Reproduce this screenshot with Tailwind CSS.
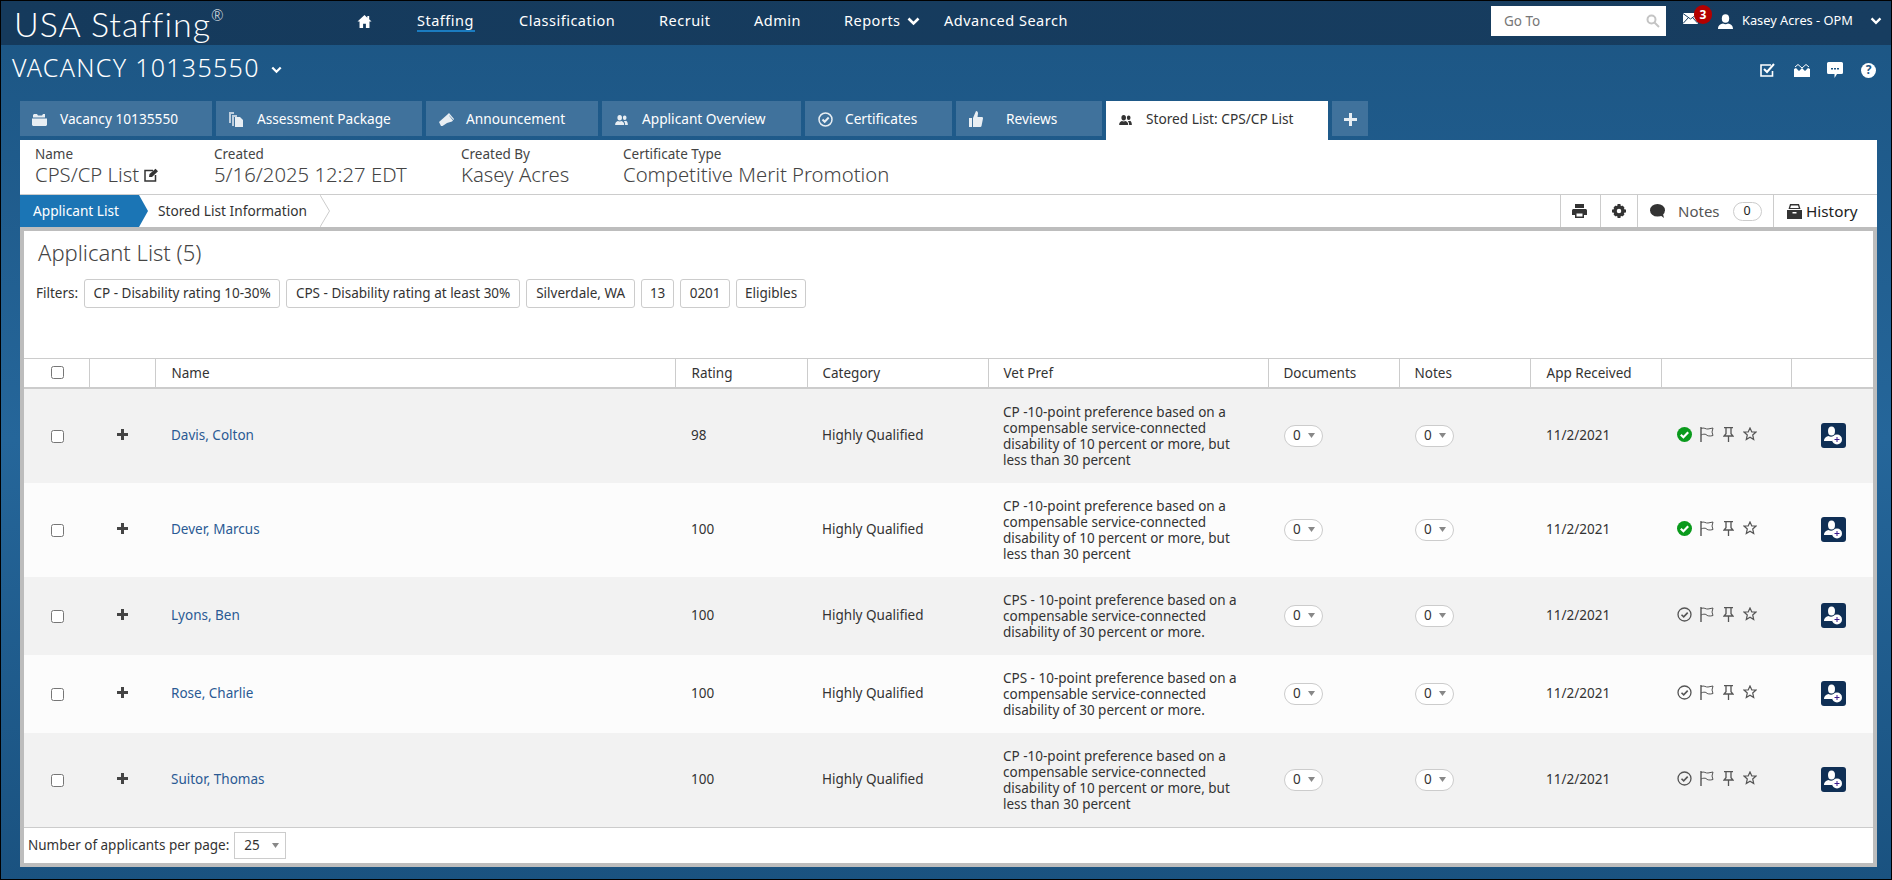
<!DOCTYPE html>
<html lang="en">
<head>
  <meta charset="UTF-8">
  <title>USA Staffing - Stored List</title>
  <script src="https://cdn.jsdelivr.net/npm/@tailwindcss/browser@4"></script>
</head>
<body class="w-[1892px] h-[880px] overflow-hidden border border-black font-['Noto_Sans',sans-serif] text-[13.5px] text-[#333] flex flex-col bg-linear-to-b from-[#1c5583] via-[#25669a] to-[#1a5280]">

  <!-- top nav -->
  <nav class="h-[44px] shrink-0 flex items-center pb-[4px] bg-linear-to-r from-[#153a5c] to-[#173d60] text-white text-[14.5px] tracking-[.5px]">
    <div class="w-[356px] pl-[13px] mt-[6px] flex items-start font-['Lato',sans-serif] font-light text-[34px] tracking-[1px] leading-none">USA Staffing<span class="text-[15px] leading-none mt-[1px]">®</span></div>
    <a class="w-[60px] flex">
      <svg class="w-[15px] h-[15px]" viewBox="0 0 16 16" fill="#fff"><path d="M8 1 .5 8h2.200v7h3.800v-4.500h3V15h3.800V8h2.200l-2.500-2.300V2h-2v1.900z"/></svg>
    </a>
    <a class="w-[102px] relative">Staffing<span class="absolute left-0 top-[20px] w-[58px] h-[2px] bg-[#1b7cc0]"></span></a>
    <a class="w-[140px]">Classification</a>
    <a class="w-[95px]">Recruit</a>
    <a class="w-[90px]">Admin</a>
    <a class="w-[100px] flex items-center gap-[6px]">Reports
      <svg class="w-[13px] h-[9px]" viewBox="0 0 13 9" fill="none" stroke="#fff" stroke-width="2.600"><path d="m1.500 1.500 5 5 5-5"/></svg>
    </a>
    <a>Advanced Search</a>
    <div class="ml-auto w-[175px] h-[30px] bg-white flex items-center justify-between pl-[13px] pr-[6px] text-[#777] text-[13.5px] tracking-normal">Go To
      <svg class="w-[14px] h-[14px]" viewBox="0 0 14 14" fill="none" stroke="#c4c4c4" stroke-width="2"><circle cx="5.500" cy="5.500" r="4"/><path d="m8.500 8.500 4.500 4.500"/></svg>
    </div>
    <div class="relative w-[35px] ml-[17px] mt-[-5px] flex">
      <svg class="w-[15px] h-[11px]" viewBox="0 0 15 11"><rect width="15" height="11" fill="#fff"/><path d="m0 .5 7.500 5.500L15 .5M0 10.500l5.500-6M15 10.500l-5.500-6" fill="none" stroke="#173d60"/></svg>
      <span class="absolute left-[11px] top-[-8px] w-[18px] h-[19px] rounded-full bg-[#b30000] text-white text-[12px] font-bold tracking-normal flex items-center justify-center">3</span>
    </div>
    <svg class="w-[15px] h-[15px]" viewBox="0 0 15 15" fill="#fff"><ellipse cx="7.500" cy="4.500" rx="3.700" ry="4.300"/><path d="M0 15c0-4 2.500-5 5-5.500 1.500 1 3.500 1 5 0 2.500.5 5 1.500 5 5.500z"/></svg>
    <span class="ml-[9px] w-[128px] text-[12.8px] tracking-normal">Kasey Acres - OPM</span>
    <svg class="w-[12px] h-[8px] mr-[9px]" viewBox="0 0 13 9" fill="none" stroke="#fff" stroke-width="2.600"><path d="m1.500 1.500 5 5 5-5"/></svg>
  </nav>

  <!-- vacancy title bar -->
  <div class="h-[56px] shrink-0 flex items-center pl-[11px] text-white">
    <span class="text-[25px] tracking-[1.300px] font-light mt-[-10px]">VACANCY 10135550</span>
    <svg class="w-[11px] h-[8px] ml-[11px] mt-[-6px]" viewBox="0 0 13 9" fill="none" stroke="#fff" stroke-width="2.600"><path d="m1.500 1.500 5 5 5-5"/></svg>
    <div class="ml-auto mr-[15px] mt-[-6px] flex items-center">
      <svg class="w-[15px] h-[14px]" viewBox="0 0 15 14" fill="none" stroke="#fff"><path stroke-width="1.600" d="M12.500 8v5H1V2h10"/><path stroke-width="2" d="m4 6 3 3 7-8"/></svg>
      <svg class="w-[16px] h-[13px] ml-[19px]" viewBox="0 0 16 13" fill="#fff"><path d="M0 5v8h16V5l-2-1-3 3-3-3-3 3-3-3z"/><path d="m1 3 3-2.500 4 3.500 4-3.500 3 2.500" fill="none" stroke="#fff"/></svg>
      <svg class="w-[16px] h-[16px] ml-[17px]" viewBox="0 0 16 16" fill="#fff"><path d="M1.500 0h13A1.500 1.500 0 0 1 16 1.500v9a1.500 1.500 0 0 1-1.500 1.500H10l-2.500 4V12h-6A1.500 1.500 0 0 1 0 10.500v-9A1.500 1.500 0 0 1 1.500 0z"/><path d="M4 6h2v1.500H4zm3 0h2v1.500H7zm3 0h2v1.500h-2z" fill="#1c5583"/></svg>
      <span class="w-[15px] h-[15px] ml-[18px] rounded-full bg-white text-[#1c5583] text-[12px] font-bold flex items-center justify-center leading-none">?</span>
    </div>
  </div>

  <!-- tabs -->
  <div class="h-[39px] shrink-0 flex gap-[4px] pl-[19px] text-white text-[13.7px]">
    <a class="w-[192px] h-[35px] pt-[2px] bg-[#40729c] flex items-center pl-[12px]">
      <svg class="w-[15px] h-[12px] mr-[13px]" viewBox="0 0 15 12" fill="#e8eef3"><path d="M2 0h3l1 1.500h4L11 0h2v3.500H1V1zM0 4.500h15V11l-1 1H1l-1-1z"/></svg>Vacancy 10135550</a>
    <a class="w-[206px] h-[35px] pt-[2px] bg-[#40729c] flex items-center pl-[13px]">
      <svg class="w-[15px] h-[15px] mr-[13px]" viewBox="0 0 15 15" fill="#e8eef3"><path d="M0 0h5v2H2v9H0zm3 3h5v2H5v9H3z" opacity=".75"/><path d="M6 5h5l3 3v7H6z"/></svg>Assessment Package</a>
    <a class="w-[172px] h-[35px] pt-[2px] bg-[#40729c] flex items-center pl-[13px]">
      <svg class="w-[15px] h-[14px] mr-[12px]" viewBox="0 0 15 14" fill="#e8eef3"><path d="M0 9 9 1l2 1-1 .5 4 5-1 1L8 10 3.500 13H2zM10 0l5 6-.5 1L9 1z"/></svg>Announcement</a>
    <a class="w-[199px] h-[35px] pt-[2px] bg-[#40729c] flex items-center pl-[13px]">
      <svg class="w-[13px] h-[10px] mr-[14px]" viewBox="0 0 14 11" fill="#e8eef3"><ellipse cx="5" cy="3" rx="2.500" ry="3"/><path d="M0 11c0-3 1.500-4 3-4.500 1 .7 3 .7 4 0 1.500.5 3 1.500 3 4.500z"/><ellipse cx="10.500" cy="3" rx="2" ry="2.500"/><path d="M11 11c0-2-.5-3.500-1.500-4.500 1 .3 1.500.3 2.500-.2 1 .5 2 1.500 2 4.700z"/></svg>Applicant Overview</a>
    <a class="w-[147px] h-[35px] pt-[2px] bg-[#40729c] flex items-center pl-[13px]">
      <svg class="w-[15px] h-[15px] mr-[12px]" viewBox="0 0 15 15" fill="none" stroke="#e8eef3" stroke-width="1.500"><circle cx="7.500" cy="7.500" r="6.500"/><path d="m4.500 7.500 2.200 2.300 4-4.300" stroke-width="2"/></svg>Certificates</a>
    <a class="w-[146px] h-[35px] pt-[2px] bg-[#40729c] flex items-center pl-[13px]">
      <svg class="w-[14px] h-[17px] mr-[23px]" viewBox="0 0 14 17" fill="#e8eef3"><path d="M0 7h3v9H0zM4 7l3-7c1.500 0 2 1 2 2.500L8.500 6H13c1 0 1 1 1 1.500L12.500 15c-.2.800-1 1-1.500 1H4z"/></svg>Reviews</a>
    <a class="w-[222px] h-[39px] pb-[2px] bg-white text-[#333] flex items-center pl-[13px]">
      <svg class="w-[13px] h-[10px] mr-[14px]" viewBox="0 0 14 11" fill="#333"><ellipse cx="5" cy="3" rx="2.500" ry="3"/><path d="M0 11c0-3 1.500-4 3-4.500 1 .7 3 .7 4 0 1.500.5 3 1.500 3 4.500z"/><ellipse cx="10.500" cy="3" rx="2" ry="2.500"/><path d="M11 11c0-2-.5-3.500-1.500-4.500 1 .3 1.500.3 2.500-.2 1 .5 2 1.500 2 4.700z"/></svg>Stored List: CPS/CP List</a>
    <a class="w-[36px] h-[35px] pt-[2px] bg-[#40729c] flex items-center justify-center">
      <svg class="w-[13px] h-[13px]" viewBox="0 0 13 13" fill="#e8eef3"><path d="M5 0h3v5h5v3H8v5H5V8H0V5h5z"/></svg></a>
  </div>

  <!-- white work area -->
  <div class="ml-[19px] w-[1857px] flex-1 mb-[13px] flex flex-col bg-white">
    <!-- record header -->
    <div class="h-[54px] shrink-0 flex pl-[15px] pt-[5px] text-[#444]">
      <div class="w-[179px]"><div class="leading-[18px]">Name</div><div class="text-[20.3px] leading-[23px] font-light flex items-center gap-[5px]">CPS/CP List
        <svg class="w-[14px] h-[14px]" viewBox="0 0 14 14" fill="none" stroke="#333" stroke-width="1.500"><path d="M9 2.500H1v10.500h10.500V7"/><path d="m5 9 .5-3L11.500.8 14 3.300 8 9z" fill="#333" stroke="none"/></svg></div></div>
      <div class="w-[247px]"><div class="leading-[18px]">Created</div><div class="text-[20.3px] leading-[23px] font-light">5/16/2025 12:27 EDT</div></div>
      <div class="w-[162px]"><div class="leading-[18px]">Created By</div><div class="text-[20.3px] leading-[23px] font-light">Kasey Acres</div></div>
      <div><div class="leading-[18px]">Certificate Type</div><div class="text-[20.3px] leading-[23px] font-light">Competitive Merit Promotion</div></div>
    </div>

    <!-- breadcrumb steps + actions -->
    <div class="h-[33px] shrink-0 border-t border-[#ccc] flex items-stretch text-[13.7px]">
      <div class="w-[128px] bg-[#1b75b5] text-white flex items-center pl-[13px] [clip-path:polygon(0_0,119px_0,128px_50%,119px_100%,0_100%)]">Applicant List</div>
      <div class="relative w-[182px] flex items-center pl-[10px]">Stored List Information
        <svg class="absolute right-0 top-0 w-[10px] h-[32px]" viewBox="0 0 10 32" fill="none" stroke="#ccc"><path d="m0 0 9.500 16L0 32"/></svg>
      </div>
      <div class="ml-auto flex items-stretch text-[#222]">
        <div class="w-[40px] border-l border-[#ccc] flex items-center justify-center pr-[3px]">
          <svg class="w-[15px] h-[14px]" viewBox="0 0 15 14" fill="#333"><path d="M3 0h9v4H3zM1.500 5h12c.8 0 1.500.7 1.500 1.500V11h-3v3H3v-3H0V6.500C0 5.700.7 5 1.500 5zM4.500 9.500V12.500h6V9.500z"/></svg></div>
        <div class="w-[37px] border-l border-[#ccc] flex items-center justify-center">
          <svg class="w-[14px] h-[14px]" viewBox="0 0 14 14"><circle cx="7" cy="7" r="4" fill="none" stroke="#333" stroke-width="3.500"/><path d="M5.500 0h3v3h-3zm0 11h3v3h-3zM0 5.500h3v3H0zm11 0h3v3h-3zM1.500 3.500l2-2 2 2-2 2zm7 7 2-2 2 2-2 2zm-7 0 2-2 2 2-2 2zm7-7 2-2 2 2-2 2z" fill="#333"/></svg></div>
        <div class="w-[136px] border-l border-[#ccc] flex items-center pl-[12px]">
          <svg class="w-[15px] h-[14px] shrink-0" viewBox="0 0 15 14" fill="#333"><ellipse cx="7.500" cy="6.300" rx="7.500" ry="6.300"/><path d="m10 11 4 3-1-4z"/></svg>
          <span class="ml-[13px] text-[#555] text-[15px]">Notes</span>
          <span class="ml-[13px] w-[29px] h-[19px] rounded-full border border-[#ccc] flex items-center justify-center text-[12.5px]">0</span>
        </div>
        <div class="w-[104px] border-l border-[#ccc] flex items-center pl-[13px] gap-[4px] text-[15.300px]">
          <svg class="w-[15px] h-[15px]" viewBox="0 0 15 15" fill="#333"><path d="M3 0h9l1.500 5h-12zM4 1.500l-.8 2.500h8.600L11 1.500zM0 6h15v9H0zm5.500 2v1.500h4V8z"/></svg>History</div>
      </div>
    </div>

    <!-- applicant list panel -->
    <div class="flex-1 border-x-4 border-t-4 border-b-4 border-[#bdbdbd] flex flex-col">
      <h2 class="h-[48px] shrink-0 pl-[14px] pt-[6px] text-[22px] font-light leading-[30px] text-[#444]">Applicant List (5)</h2>
      <div class="h-[79px] shrink-0 flex items-start pl-[12px] gap-[6px]">
        <span class="h-[29px] flex items-center">Filters:</span>
        <span class="w-[196px] h-[29px] flex items-center justify-center border border-[#ccc] rounded-[3px]">CP - Disability rating 10-30%</span>
        <span class="w-[234px] h-[29px] flex items-center justify-center border border-[#ccc] rounded-[3px]">CPS - Disability rating at least 30%</span>
        <span class="w-[109px] h-[29px] flex items-center justify-center border border-[#ccc] rounded-[3px]">Silverdale, WA</span>
        <span class="w-[33px] h-[29px] flex items-center justify-center border border-[#ccc] rounded-[3px]">13</span>
        <span class="w-[50px] h-[29px] flex items-center justify-center border border-[#ccc] rounded-[3px]">0201</span>
        <span class="w-[70px] h-[29px] flex items-center justify-center border border-[#ccc] rounded-[3px]">Eligibles</span>
      </div>

      <table class="w-full table-fixed border-collapse text-left">
        <colgroup>
          <col class="w-[65px]"><col class="w-[66px]"><col class="w-[520px]"><col class="w-[132px]"><col class="w-[181px]"><col class="w-[280px]"><col class="w-[131px]"><col class="w-[131px]"><col class="w-[131px]"><col class="w-[130px]"><col class="w-[82px]">
        </colgroup>
        <thead>
          <tr class="h-[29px] border-t border-b-2 border-[#ccc]">
            <th class="text-center font-normal pl-[2px]"><input type="checkbox" class="w-[13px] h-[13px] mb-[3px] align-middle"></th>
            <th class="border-l border-[#ccc]"></th>
            <th class="border-l border-[#ccc] pl-[16px] pt-[1px] font-normal">Name</th>
            <th class="border-l border-[#ccc] pl-[16px] pt-[1px] font-normal">Rating</th>
            <th class="border-l border-[#ccc] pl-[15px] pt-[1px] font-normal">Category</th>
            <th class="border-l border-[#ccc] pl-[15px] pt-[1px] font-normal">Vet Pref</th>
            <th class="border-l border-[#ccc] pl-[15px] pt-[1px] font-normal">Documents</th>
            <th class="border-l border-[#ccc] pl-[15px] pt-[1px] font-normal">Notes</th>
            <th class="border-l border-[#ccc] pl-[16px] pt-[1px] font-normal">App Received</th>
            <th class="border-l border-[#ccc]"></th>
            <th class="border-l border-[#ccc]"></th>
          </tr>
        </thead>
        <tbody id="rows"></tbody>
      </table>

      <div class="mt-auto h-[36px] shrink-0 border-t border-[#ccc] flex items-center pl-[4px]">
        Number of applicants per page:
        <span class="ml-[5px] w-[52px] h-[27px] border border-[#ccc] flex items-center justify-between pl-[9px] pr-[6px]">25
          <svg class="w-[7px] h-[5px]" viewBox="0 0 7 5" fill="#888"><path d="M0 0h7L3.500 5z"/></svg></span>
      </div>
    </div>
  </div>

  <script>
    const CP = "CP -10-point preference based on a compensable service-connected disability of 10 percent or more, but less than 30 percent";
    const CPS = "CPS - 10-point preference based on a compensable service-connected disability of 30 percent or more.";
    const applicants = [
      { name: "Davis, Colton", rating: 98, pref: CP, checked: true },
      { name: "Dever, Marcus", rating: 100, pref: CP, checked: true },
      { name: "Lyons, Ben", rating: 100, pref: CPS, checked: false },
      { name: "Rose, Charlie", rating: 100, pref: CPS, checked: false },
      { name: "Suitor, Thomas", rating: 100, pref: CP, checked: false }
    ];

    const caret = '<svg class="w-[7px] h-[5px]" viewBox="0 0 7 5" fill="#888"><path d="M0 0h7L3.500 5z"/></svg>';
    const pill = '<span class="w-[39px] h-[22px] rounded-full border border-[#ccc] bg-white flex items-center justify-between pl-[8px] pr-[7px]">0' + caret + '</span>';
    const checkOn = '<svg class="w-[15px] h-[15px]" viewBox="0 0 15 15"><circle cx="7.500" cy="7.500" r="7.500" fill="#0a9a1c"/><path d="m3.800 7.700 2.600 2.600 4.800-5" fill="none" stroke="#fff" stroke-width="2.200"/></svg>';
    const checkOff = '<svg class="w-[15px] h-[15px]" viewBox="0 0 15 15" fill="none" stroke="#555" stroke-width="1.300"><circle cx="7.500" cy="7.500" r="6.500"/><path d="m4.500 7.700 2.200 2.200 4-4.300" stroke-width="1.600"/></svg>';
    const flag = '<svg class="w-[14px] h-[15px] ml-[8px]" viewBox="0 0 14 15" fill="none" stroke="#555"><path d="M1 0v15" stroke-width="1.400"/><path d="M1 1.500c3-1.500 5 1 7 .5l5-1-1 4 1 3.500c-3 1-6 .5-7-1-1-.5-3-.5-5 .5"/></svg>';
    const pin = '<svg class="w-[11px] h-[15px] ml-[9px]" viewBox="0 0 11 15" fill="none" stroke="#555" stroke-width="1.300"><path d="M1 .7h9M3 .7v6L1 9h9L8 6.700v-6M5.500 9v6"/></svg>';
    const star = '<svg class="w-[14px] h-[14px] ml-[9px]" viewBox="0 0 14 14" fill="none" stroke="#555" stroke-width="1.200"><path d="m7 1 1.800 4H13l-3.300 3 1 4.500L7 10.200 3.300 12.500l1-4.500L1 5h4.200z"/></svg>';
    const addUser = '<span class="w-[25px] h-[25px] rounded-[3px] bg-[#0f2f55] flex items-center justify-center"><svg class="w-[19px] h-[19px]" viewBox="0 0 19 19"><ellipse cx="7.500" cy="5" rx="3.500" ry="4.500" fill="#fff"/><path d="M0 15c0-3 2.500-4.500 4.500-5 1.500 1 3.500 1 5 0 1 .2 2 .6 2.500 1L8 15z" fill="#fff"/><circle cx="13" cy="13.500" r="5" fill="#fff"/><path d="M10.500 13.500h5M13 11v5" stroke="#3b1a8c"/></svg></span>';

    document.getElementById("rows").innerHTML = applicants.map((a, i) => `
      <tr class="${i % 2 ? "bg-[#fcfcfc]" : "bg-[#f2f2f2]"}">
        <td class="text-center pl-[2px]"><input type="checkbox" class="w-[13px] h-[13px] mb-[1px] align-middle"></td>
        <td class="text-center pl-[1px]"><svg class="inline-block w-[11px] h-[11px] mb-[4px]" viewBox="0 0 11 11" fill="#444"><path d="M4 0h3v4h4v3H7v4H4V7H0V4h4z"/></svg></td>
        <td class="pl-[16px] text-[#2a5a94]">${a.name}</td>
        <td class="pl-[16px]">${a.rating}</td>
        <td class="pl-[15px]">Highly Qualified</td>
        <td class="pl-[15px] pr-[30px] py-[15px] leading-[16px]">${a.pref}</td>
        <td class="pl-[16px]">${pill}</td>
        <td class="pl-[16px]">${pill}</td>
        <td class="pl-[16px]">11/2/2021</td>
        <td class="pl-[16px]"><div class="flex items-center mb-[3px]">${a.checked ? checkOn : checkOff}${flag}${pin}${star}</div></td>
        <td class="pl-[30px]">${addUser}</td>
      </tr>`).join("");
  </script>
</body>
</html>
